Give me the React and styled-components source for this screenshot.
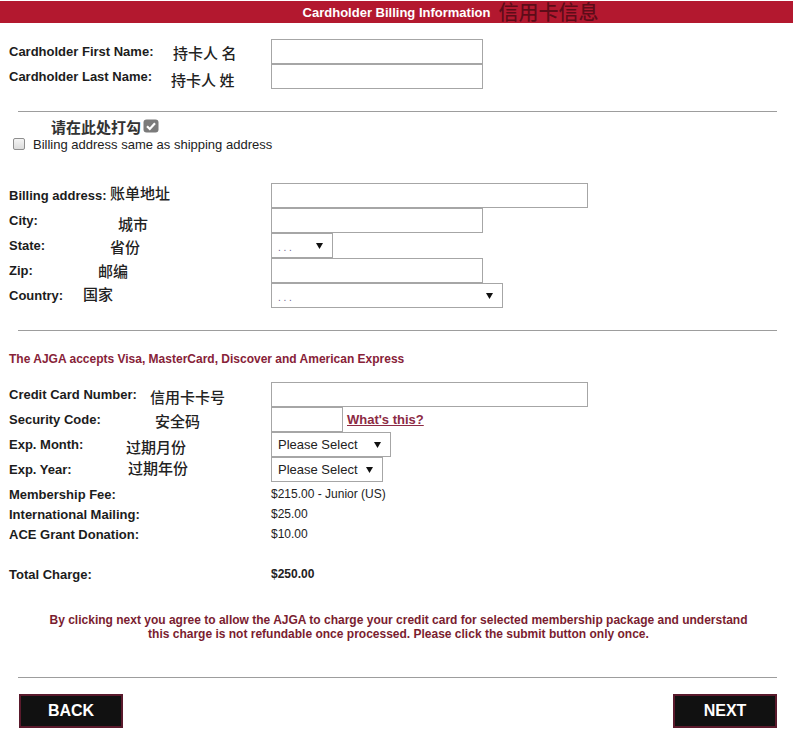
// Cardholder billing form with Chinese annotations laid over the English labels
import React from "react";
import styled, { createGlobalStyle } from "styled-components";

const GlobalStyle = createGlobalStyle`
  body {
    margin: 0;
    background: #fff;
    font-family: "Liberation Sans", Arial, sans-serif;
    color: #1c1c1c;
  }
`;

const Dropdown = ({ width, value }) => (
  <SelectBox $w={width}>
    {value ? <SelectText>{value}</SelectText> : <Dots>. . .</Dots>}
    <svg width="7" height="7" viewBox="0 0 7 7">
      <polygon points="0,1 7,1 3.5,7" fill="#111" />
    </svg>
  </SelectBox>
);

const FieldRow = ({ label, note, noteX, noteY = 0, children }) => (
  <Row>
    <LabelCell>
      <Label>{label}</Label>
      {note && (
        <Note $x={noteX} $dy={noteY}>
          {note}
        </Note>
      )}
    </LabelCell>
    <Controls>{children}</Controls>
  </Row>
);

const App = () => {
  return (
    <>
      <GlobalStyle />
      <Page>
        <TitleBar>
          <Title>
            Cardholder Billing Information
            <TitleNote>信用卡信息</TitleNote>
          </Title>
        </TitleBar>

        <Group $top={16}>
          <FieldRow label="Cardholder First Name:" note="持卡人 名" noteX={164}>
            <TextInput $w={212} />
          </FieldRow>
          <FieldRow label="Cardholder Last Name:" note="持卡人 姓" noteX={162} noteY={2}>
            <TextInput $w={212} />
          </FieldRow>
        </Group>

        <Rule $top={22} />

        <TickLine>
          请在此处打勾
          <svg width="16" height="14" viewBox="0 0 16 14">
            <rect x="0.5" y="0.5" width="15" height="13" rx="3" fill="#7b7b7b" />
            <path d="M4 7.2 L6.8 10 L12 4.2" stroke="#fff" strokeWidth="2.2" fill="none" />
          </svg>
        </TickLine>
        <CheckRow>
          <Box type="checkbox" />
          Billing address same as shipping address
        </CheckRow>

        <Group $top={31}>
          <FieldRow label="Billing address:" note="账单地址" noteX={101} noteY={-4}>
            <TextInput $w={317} />
          </FieldRow>
          <FieldRow label="City:" note="城市" noteX={109} noteY={2}>
            <TextInput $w={212} />
          </FieldRow>
          <FieldRow label="State:" note="省份" noteX={101}>
            <Dropdown width={62} />
          </FieldRow>
          <FieldRow label="Zip:" note="邮编" noteX={89} noteY={-1}>
            <TextInput $w={212} />
          </FieldRow>
          <FieldRow label="Country:" note="国家" noteX={74} noteY={-3}>
            <Dropdown width={232} />
          </FieldRow>
        </Group>

        <Rule $top={22} />

        <Accepts>The AJGA accepts Visa, MasterCard, Discover and American Express</Accepts>

        <Group $top={15}>
          <FieldRow label="Credit Card Number:" note="信用卡卡号" noteX={141} noteY={1}>
            <TextInput $w={317} />
          </FieldRow>
          <FieldRow label="Security Code:" note="安全码" noteX={146}>
            <TextInput $w={72} />
            <HelpLink href="#">What's this?</HelpLink>
          </FieldRow>
          <FieldRow label="Exp. Month:" note="过期月份" noteX={117} noteY={1}>
            <Dropdown width={120} value="Please Select" />
          </FieldRow>
          <FieldRow label="Exp. Year:" note="过期年份" noteX={119} noteY={-3}>
            <Dropdown width={112} value="Please Select" />
          </FieldRow>
        </Group>

        <Charges>
          <ChargeRow>
            <Label>Membership Fee:</Label>
            <Amount>$215.00 - Junior (US)</Amount>
          </ChargeRow>
          <ChargeRow>
            <Label>International Mailing:</Label>
            <Amount>$25.00</Amount>
          </ChargeRow>
          <ChargeRow>
            <Label>ACE Grant Donation:</Label>
            <Amount>$10.00</Amount>
          </ChargeRow>
          <ChargeRow />
          <ChargeRow>
            <Label>Total Charge:</Label>
            <Amount $bold>$250.00</Amount>
          </ChargeRow>
        </Charges>

        <Disclaimer>
          By clicking next you agree to allow the AJGA to charge your credit card for selected membership package and
          understand
          <br />
          this charge is not refundable once processed. Please click the submit button only once.
        </Disclaimer>

        <Rule $top={36} />

        <Buttons>
          <NavButton>BACK</NavButton>
          <NavButton>NEXT</NavButton>
        </Buttons>
      </Page>
    </>
  );
};

export default App;

const Page = styled.div`
  width: 797px;
  padding-bottom: 17px;
`;

const TitleBar = styled.div`
  margin-top: 1px;
  width: 793px;
  height: 22px;
  background: #b3182f;
  display: flex;
  align-items: center;
  justify-content: center;
`;

const Title = styled.span`
  position: relative;
  color: #fff;
  font-weight: bold;
  font-size: 13px;
`;

const TitleNote = styled.span`
  position: absolute;
  left: 100%;
  top: -4px;
  margin-left: 8px;
  white-space: nowrap;
  font-family: "Noto Sans CJK SC", sans-serif;
  font-size: 20px;
  line-height: 21px;
  font-weight: 500;
  color: rgba(60, 8, 16, 0.72);
`;

const Group = styled.div`
  margin-top: ${(p) => p.$top}px;
`;

const Row = styled.div`
  display: grid;
  grid-template-columns: 262px auto;
  align-items: center;
  height: 25px;
  padding-left: 9px;
`;

const LabelCell = styled.div`
  position: relative;
  height: 25px;
  display: flex;
  align-items: center;
`;

const Label = styled.span`
  font-size: 13px;
  font-weight: bold;
  color: #1c1c1c;
  white-space: nowrap;
`;

const Note = styled.span`
  position: absolute;
  left: ${(p) => p.$x}px;
  top: 50%;
  transform: translateY(calc(-50% + ${(p) => p.$dy}px));
  font-family: "Noto Sans CJK SC", sans-serif;
  font-size: 15px;
  font-weight: 500;
  color: #222;
  white-space: pre;
`;

const Controls = styled.div`
  display: flex;
  align-items: center;
  gap: 4px;
  height: 25px;
`;

const TextInput = styled.input`
  box-sizing: border-box;
  width: ${(p) => p.$w}px;
  height: 25px;
  margin: 0;
  border: 1px solid #a6a6a6;
  background: #fff;
`;

const SelectBox = styled.div`
  box-sizing: border-box;
  width: ${(p) => p.$w}px;
  height: 25px;
  border: 1px solid #a6a6a6;
  background: #fff;
  display: flex;
  align-items: center;
  justify-content: space-between;
  padding: 0 9px 0 6px;
`;

const SelectText = styled.span`
  font-size: 13px;
  color: #222;
`;

const Dots = styled.span`
  font-size: 10px;
  color: #6f6590;
  padding-top: 3px;
`;

const Rule = styled.div`
  margin-top: ${(p) => p.$top}px;
  margin-left: 18px;
  width: 759px;
  height: 1px;
  background: #9d9d9d;
`;

const TickLine = styled.div`
  margin-top: 6px;
  padding-left: 51px;
  height: 16px;
  display: flex;
  align-items: center;
  gap: 2px;
  font-family: "Noto Sans CJK SC", sans-serif;
  font-size: 15px;
  font-weight: bold;
  color: #333;
`;

const CheckRow = styled.label`
  margin-top: 2px;
  padding-left: 13px;
  height: 16px;
  display: flex;
  align-items: center;
  gap: 8px;
  font-size: 13px;
  color: #222;
`;

const Box = styled.input`
  appearance: none;
  margin: 0;
  width: 12px;
  height: 12px;
  border: 1px solid #8e8e8e;
  border-radius: 2px;
  background: linear-gradient(#f4f4f4, #dcdcdc);
`;

const Accepts = styled.div`
  margin-top: 20px;
  padding-left: 9px;
  line-height: 16px;
  font-size: 12px;
  font-weight: bold;
  color: #872238;
`;

const HelpLink = styled.a`
  font-size: 13px;
  font-weight: bold;
  color: #8c2a44;
  text-decoration: underline;
`;

const Charges = styled.div`
  margin-top: 2px;
`;

const ChargeRow = styled.div`
  display: grid;
  grid-template-columns: 262px auto;
  align-items: center;
  height: 20px;
  padding-left: 9px;
`;

const Amount = styled.span`
  font-size: 12px;
  font-weight: ${(p) => (p.$bold ? "bold" : "normal")};
  color: #222;
`;

const Disclaimer = styled.p`
  margin: 29px 0 0;
  width: 797px;
  text-align: center;
  font-size: 12px;
  line-height: 14px;
  font-weight: bold;
  color: #7a1d30;
`;

const Buttons = styled.div`
  margin-top: 16px;
  margin-left: 19px;
  width: 758px;
  display: flex;
  justify-content: space-between;
`;

const NavButton = styled.button`
  box-sizing: border-box;
  width: 104px;
  height: 34px;
  background: #111;
  border: 2px solid #5a1a2c;
  color: #fff;
  font-family: "Liberation Sans", Arial, sans-serif;
  font-size: 16px;
  font-weight: bold;
  cursor: pointer;
`;
